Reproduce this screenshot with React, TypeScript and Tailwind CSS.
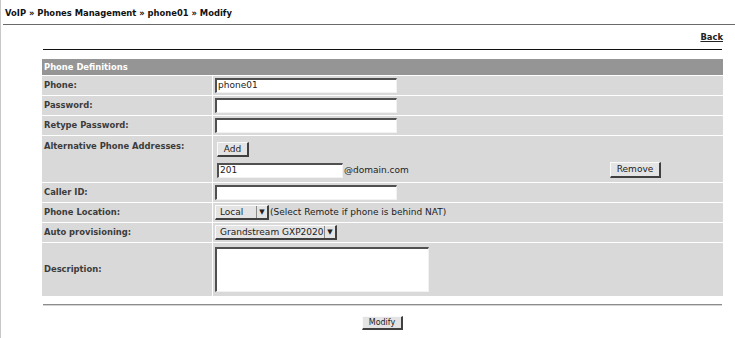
import React from 'react';

const labelCls = 'bg-[#d9d9d9] pl-[2px] text-[8.4px] font-bold text-[#3c3c3c] leading-[11px] flex items-center';
const valueCls = 'bg-[#d9d9d9] pl-[2px] flex items-center';
const inputCls =
  'h-[15px] bg-white border-t-2 border-l-2 border-b border-r border-t-[#505050] border-l-[#505050] border-b-[#f2f2f2] border-r-[#f2f2f2] text-[9px] leading-[11px] pl-[1px] text-[#222]';
const btnCls =
  'bg-[#e4e4e4] border-t border-l border-b-2 border-r-2 border-t-[#fafafa] border-l-[#fafafa] border-b-[#404040] border-r-[#404040] leading-[11px] text-[#222] flex items-center justify-center';

function Select({ value, width }: { value: string; width: string }) {
  return (
    <div
      className={`${width} h-[15px] flex bg-[#e4e4e4] border-t border-l border-b-2 border-r-2 border-t-[#fafafa] border-l-[#fafafa] border-b-[#404040] border-r-[#404040] text-[9px] leading-[11px] text-[#222]`}
    >
      <span className="flex-1 pl-[4px] flex items-center">{value}</span>
      <span className="w-[11px] border-l border-l-[#8a8a8a] flex items-center justify-center text-[7px] text-[#222]">
        ▼
      </span>
    </div>
  );
}

export default function App() {
  return (
    <div className="w-[735px] h-[338px] bg-white border-l border-[#c8c8c8] font-['DejaVu_Sans',sans-serif] overflow-hidden">
      {/* Breadcrumb */}
      <div className="h-[24px] pl-[4px] pt-[8px] text-[8.4px] leading-[11px] font-bold text-[#111]">
        VoIP » Phones Management » phone01 » Modify
      </div>
      <div className="ml-[2px] h-px bg-[#6a6a6a]" />

      <div className="pl-[41px] pr-[12px]">
        <div className="h-[24px] pt-[7px] flex justify-end">
          <a className="text-[8.4px] leading-[11px] font-bold text-[#222] underline">Back</a>
        </div>
        <div className="mx-px h-px bg-[#111]" />

        {/* Phone Definitions */}
        <div className="mt-[9px] grid grid-cols-[170px_510px] gap-px">
          <div className="col-span-2 h-[16px] bg-[#959595] pl-[2px] text-[8.4px] leading-[16px] font-bold text-white">
            Phone Definitions
          </div>

          <div className={`${labelCls} h-[19px]`}>Phone:</div>
          <div className={valueCls}>
            <div className={`${inputCls} w-[182px] border-t border-l border-t-[#8a8a8a] border-l-[#8a8a8a]`}>phone01</div>
          </div>

          <div className={`${labelCls} h-[19px]`}>Password:</div>
          <div className={valueCls}>
            <div className={`${inputCls} w-[182px]`} />
          </div>

          <div className={`${labelCls} h-[19px]`}>Retype Password:</div>
          <div className={valueCls}>
            <div className={`${inputCls} w-[182px]`} />
          </div>

          <div className="bg-[#d9d9d9] pl-[2px] pt-[5px] h-[46px] text-[8.4px] font-bold text-[#3c3c3c] leading-[11px]">
            Alternative Phone Addresses:
          </div>
          <div className="bg-[#d9d9d9] pl-[4px] pt-[6px] flex flex-col gap-[5px]">
            <button className={`${btnCls} w-[32px] h-[15px] text-[9px]`}>Add</button>
            <div className="w-[444px] flex items-center justify-between">
              <div className="flex items-center">
                <div className={`${inputCls} w-[126px] border-t border-l border-t-[#6a6a6a] border-l-[#6a6a6a]`}>201</div>
                <span className="pl-px text-[9px] leading-[11px] text-[#222]">@domain.com</span>
              </div>
              <button className={`${btnCls} w-[51px] h-[16px] text-[9px]`}>Remove</button>
            </div>
          </div>

          <div className={`${labelCls} h-[19px]`}>Caller ID:</div>
          <div className={valueCls}>
            <div className={`${inputCls} w-[182px]`} />
          </div>

          <div className={`${labelCls} h-[19px]`}>Phone Location:</div>
          <div className={valueCls}>
            <Select value="Local" width="w-[54px]" />
            <span className="pl-px text-[9px] leading-[11px] text-[#222]">(Select Remote if phone is behind NAT)</span>
          </div>

          <div className={`${labelCls} h-[19px]`}>Auto provisioning:</div>
          <div className={valueCls}>
            <Select value="Grandstream GXP2020" width="w-[122px]" />
          </div>

          <div className={`${labelCls} h-[53px]`}>Description:</div>
          <div className={valueCls}>
            <div className="w-[214px] h-[45px] bg-white border-t-2 border-l-2 border-b border-r border-t-[#505050] border-l-[#505050] border-b-[#f2f2f2] border-r-[#f2f2f2]" />
          </div>
        </div>

        <div className="mt-[8px] mx-px border-t border-b border-t-[#8c8c8c] border-b-[#d4d4d4]" />

        <div className="mt-[10px] flex justify-center">
          <button className={`${btnCls} w-[41px] h-[14px] text-[8px]`}>Modify</button>
        </div>
      </div>
    </div>
  );
}
